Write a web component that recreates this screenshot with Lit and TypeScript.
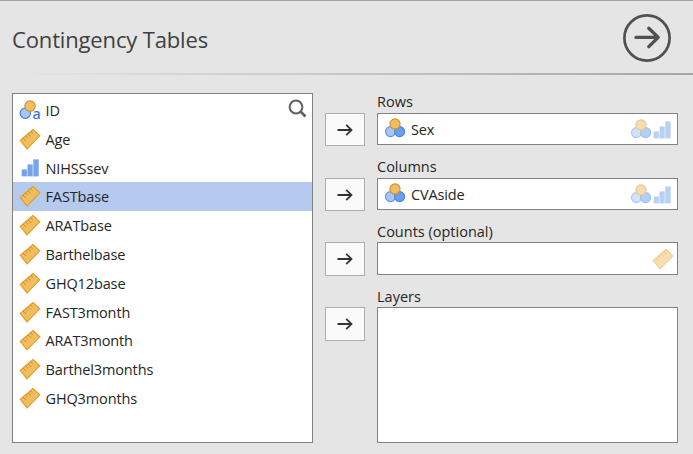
import { LitElement, html, css, svg, nothing } from "lit";
import { customElement, property } from "lit/decorators.js";

type Kind = "id" | "nominal" | "ordinal" | "continuous";

@customElement("measure-icon")
class MeasureIcon extends LitElement {
  @property() kind: Kind = "nominal";

  static styles = css`
    :host { display: block; width: 22px; height: 22px; flex: none; }
    svg { display: block; overflow: visible; }
    .a { font: 400 14.5px "Noto Sans", "Open Sans", sans-serif; letter-spacing: 0; fill: #2f76e0; stroke: #2f76e0; stroke-width: 0.2; }
  `;

  private shape() {
    switch (this.kind) {
      case "id":
        return svg`
          <circle cx="6.3" cy="14.3" r="5.2" fill="#a9c6f5" stroke="#3a7de6" stroke-width="1.1"/>
          <circle cx="11" cy="7.1" r="5.2" fill="#f0bd62" stroke="#cc912b" stroke-width="1.1"/>
          <text class="a" x="13.4" y="19.6">a</text>`;
      case "nominal":
        return svg`
          <circle cx="6.5" cy="13.6" r="5" fill="#a9c6f5" stroke="#5b93ea" stroke-width="1.1"/>
          <circle cx="15.6" cy="13.6" r="5" fill="#6b9fee" stroke="#4384e8" stroke-width="1.1"/>
          <circle cx="11" cy="6" r="5.1" fill="#f0bd62" stroke="#cc912b" stroke-width="1.1"/>`;
      case "ordinal":
        return svg`
          <g fill="#76a4ea">
            <rect x="2.7" y="12.4" width="5.2" height="7"/>
            <rect x="8.5" y="7.4" width="5.2" height="12"/>
            <rect x="14.3" y="2.4" width="5.4" height="17"/>
          </g>`;
      default:
        return svg`
          <path d="M1.2 12.3 14 1.5 20.8 7.8 8 20.8Z" fill="#f0bd62" stroke="#e39b1f" stroke-width="1.1"/>
          <path d="M4 10.2l3 2.7M6.6 8l2.1 2M9 5.9l3 2.7M11.5 3.8l2.1 2" fill="none" stroke="#d08d20" stroke-width="1"/>`;
    }
  }

  render() {
    return html`<svg width="22" height="22" viewBox="0 0 22 22">${this.shape()}</svg>`;
  }
}

interface Target {
  label: string;
  value?: string;
  allowed: Kind[];
  cls: string;
}

@customElement("app-root")
class AppRoot extends LitElement {
  private variables: { name: string; kind: Kind }[] = [
    { name: "ID", kind: "id" },
    { name: "Age", kind: "continuous" },
    { name: "NIHSSsev", kind: "ordinal" },
    { name: "FASTbase", kind: "continuous" },
    { name: "ARATbase", kind: "continuous" },
    { name: "Barthelbase", kind: "continuous" },
    { name: "GHQ12base", kind: "continuous" },
    { name: "FAST3month", kind: "continuous" },
    { name: "ARAT3month", kind: "continuous" },
    { name: "Barthel3months", kind: "continuous" },
    { name: "GHQ3months", kind: "continuous" },
  ];
  private selected = "FASTbase";

  private targets: Target[] = [
    { label: "Rows", value: "Sex", allowed: ["nominal", "ordinal"], cls: "" },
    { label: "Columns", value: "CVAside", allowed: ["nominal", "ordinal"], cls: "" },
    { label: "Counts (optional)", allowed: ["continuous"], cls: "counts" },
    { label: "Layers", allowed: [], cls: "layers" },
  ];

  static styles = css`
    :host {
      display: flex; flex-direction: column; box-sizing: border-box;
      width: 693px; height: 454px; overflow: hidden;
      background: #e5e5e5; border-top: 1px solid #a6a6a6;
      font: 14.5px/20px "Open Sans", "Noto Sans", sans-serif;
      letter-spacing: -0.13px; color: #262626;
    }
    * { box-sizing: border-box; }
    header {
      display: flex; justify-content: space-between; align-items: center;
      height: 72px; padding: 2px 22px 0 12px; flex: none;
    }
    h1 { margin: 2px 0 0; font-size: 22px; line-height: 30px; font-weight: 400; letter-spacing: -0.15px; color: #404040; }
    .go { display: block; }
    .rule { height: 2px; flex: none; background: linear-gradient(90deg, #e5e5e5 2%, #a6a6a6 100%); }
    main { display: grid; grid-template-columns: 301px 40px 301px; column-gap: 12px; padding: 18px 0 11px 12px; flex: 1; min-height: 0; }
    .list { position: relative; background: #fff; border: 1px solid #828282; padding-top: 1.6px; }
    .item { display: flex; align-items: center; height: 28.8px; padding-left: 6px; }
    .item span { margin-left: 4.5px; padding-top: 2px; }
    .item.on { background: #b5caee; }
    .search { position: absolute; right: 5px; top: 5px; }
    .targets { grid-column: 2 / 4; display: grid; grid-template-rows: 65px 64px 65px 1fr; }
    .target { display: grid; grid-template: 20px 1fr / 40px 301px; column-gap: 12px; }
    .label { grid-column: 2; margin-top: -1px; letter-spacing: 0; }
    button {
      display: grid; place-items: center; width: 40px; height: 33px; padding: 0;
      background: #fafafa; border: 1px solid #adadad;
    }
    .field {
      display: flex; align-items: center; height: 32px; padding: 0 4px 0 6px;
      background: #fff; border: 1px solid #828282;
    }
    .field > span { margin-left: 5px; padding-top: 1px; }
    .allowed { display: flex; margin-left: auto; padding-top: 1px; opacity: 0.5; }
    .allowed measure-icon + measure-icon { margin-left: -1px; }
    .counts .field { height: 33px; }
    .counts .allowed { margin-right: -1px; }
    .counts .label, .layers .label { margin-top: 0; }
    .counts button, .layers button { height: 34px; }
    .layers .field { height: 136px; }
  `;

  private renderTarget(t: Target) {
    return html`<section class="target ${t.cls}">
      <div class="label">${t.label}</div>
      <button aria-label="Assign to ${t.label}">
        <svg width="18" height="14" viewBox="0 0 18 14" fill="none" stroke="#333" stroke-width="1.8">
          <path d="M1.5 7H15.5M10.2 1.8 15.5 7l-5.3 5.2"/>
        </svg>
      </button>
      <div class="field">
        ${t.value ? html`<measure-icon kind="nominal"></measure-icon><span>${t.value}</span>` : nothing}
        <div class="allowed">${t.allowed.map((k) => html`<measure-icon .kind=${k}></measure-icon>`)}</div>
      </div>
    </section>`;
  }

  render() {
    return html`
      <header>
        <h1>Contingency Tables</h1>
        <svg class="go" width="48" height="48" viewBox="0 0 48 48" fill="none" stroke="#505050">
          <circle cx="24" cy="24" r="22.6" stroke-width="2.7"/>
          <path d="M13 23.4H35M25.8 14.3 35.2 23.4 25.8 32.6" stroke-width="3.4" stroke-linecap="round" stroke-linejoin="round"/>
        </svg>
      </header>
      <div class="rule"></div>
      <main>
        <div class="list">
          ${this.variables.map((v) => html`<div class="item ${v.name === this.selected ? "on" : ""}">
            <measure-icon .kind=${v.kind}></measure-icon><span>${v.name}</span>
          </div>`)}
          <svg class="search" width="19" height="19" viewBox="0 0 19 19" fill="none" stroke="#606060">
            <circle cx="8" cy="8" r="6.4" stroke-width="2"/>
            <path d="M12.5 12.5 17.5 17.5" stroke-width="2.6"/>
          </svg>
        </div>
        <div class="targets">${this.targets.map((t) => this.renderTarget(t))}</div>
      </main>`;
  }
}
